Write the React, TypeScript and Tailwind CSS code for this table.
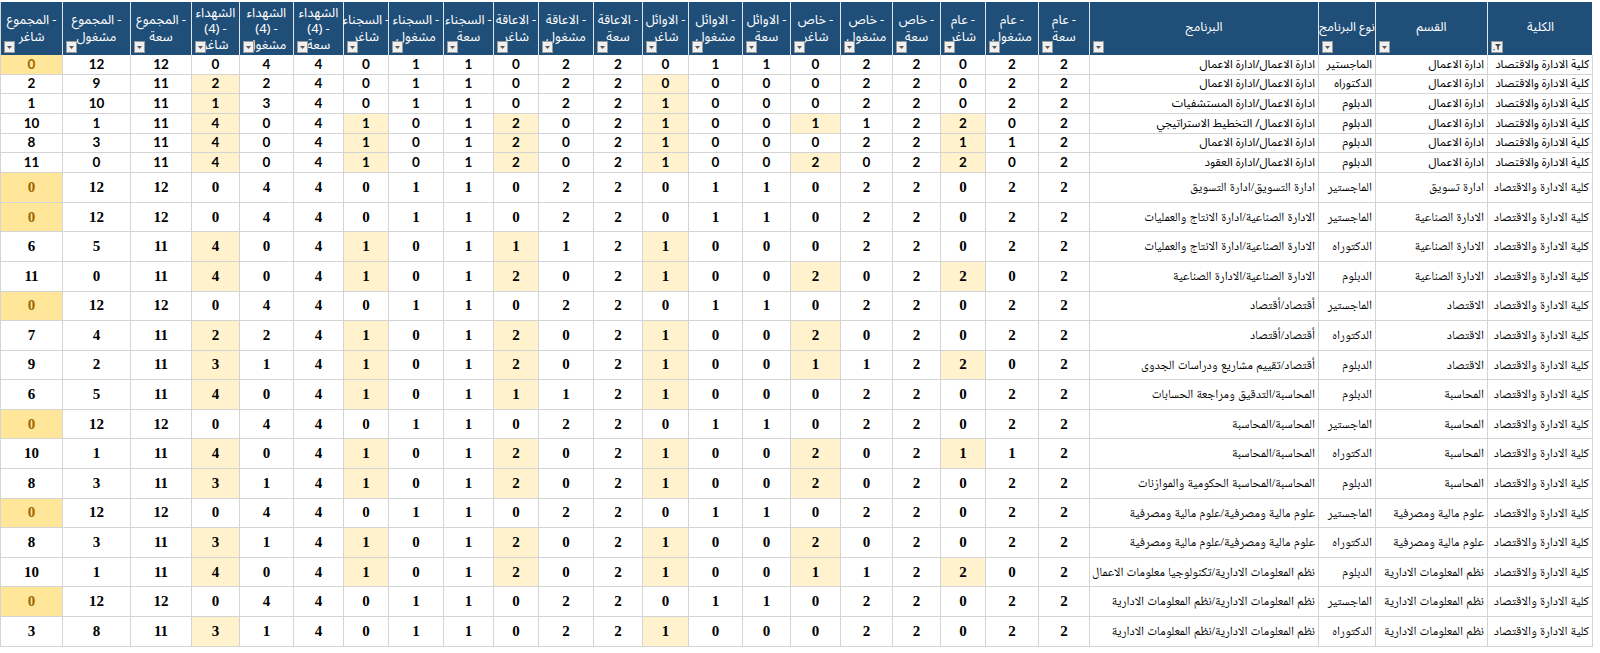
import React from "react"

// أعمدة الجدول بالترتيب المرئي من اليسار إلى اليمين
const GRID =
  "grid grid-cols-[62px_68px_61px_48px_54px_50px_45px_55px_50px_45px_55px_49px_46px_54px_48px_50px_52px_48px_45px_53px_51px_229px_57px_112px_105px]"

const groups = ["المجموع", "الشهداء", "السجناء", "الاعاقة", "الاوائل", "خاص", "عام"]
const subs = ["شاغر", "مشغول", "سعة"]

type Row = {
  college: string
  dept: string
  type: string
  program: string
  n: number[]
  extra?: number[]
}

const C = "كلية الادارة والاقتصاد"
const FULL = [0, 12, 12, 0, 4, 4, 0, 1, 1, 0, 2, 2, 0, 1, 1, 0, 2, 2, 0, 2, 2]

const rows: Row[] = [
  { college: C, dept: "ادارة الاعمال", type: "الماجستير", program: "ادارة  الاعمال/ادارة الاعمال", n: FULL },
  { college: C, dept: "ادارة الاعمال", type: "الدكتوراه", program: "ادارة  الاعمال/ادارة الاعمال", n: [2, 9, 11, 2, 2, 4, 0, 1, 1, 0, 2, 2, 0, 0, 0, 0, 2, 2, 0, 2, 2], extra: [12] },
  { college: C, dept: "ادارة الاعمال", type: "الدبلوم", program: "ادارة  الاعمال/ادارة المستشفيات", n: [1, 10, 11, 1, 3, 4, 0, 1, 1, 0, 2, 2, 1, 0, 0, 0, 2, 2, 0, 2, 2] },
  { college: C, dept: "ادارة الاعمال", type: "الدبلوم", program: "ادارة الاعمال/ التخطيط الاستراتيجي", n: [10, 1, 11, 4, 0, 4, 1, 0, 1, 2, 0, 2, 1, 0, 0, 1, 1, 2, 2, 0, 2] },
  { college: C, dept: "ادارة الاعمال", type: "الدبلوم", program: "ادارة الاعمال/ادارة الاعمال", n: [8, 3, 11, 4, 0, 4, 1, 0, 1, 2, 0, 2, 1, 0, 0, 0, 2, 2, 1, 1, 2] },
  { college: C, dept: "ادارة الاعمال", type: "الدبلوم", program: "ادارة الاعمال/ادارة العقود", n: [11, 0, 11, 4, 0, 4, 1, 0, 1, 2, 0, 2, 1, 0, 0, 2, 0, 2, 2, 0, 2] },
  { college: C, dept: "ادارة تسويق", type: "الماجستير", program: "ادارة التسويق/ادارة التسويق", n: FULL },
  { college: C, dept: "الادارة الصناعية", type: "الماجستير", program: "الادارة الصناعية/ادارة الانتاج والعمليات", n: FULL },
  { college: C, dept: "الادارة الصناعية", type: "الدكتوراه", program: "الادارة الصناعية/ادارة الانتاج والعمليات", n: [6, 5, 11, 4, 0, 4, 1, 0, 1, 1, 1, 2, 1, 0, 0, 0, 2, 2, 0, 2, 2] },
  { college: C, dept: "الادارة الصناعية", type: "الدبلوم", program: "الادارة الصناعية/الادارة الصناعية", n: [11, 0, 11, 4, 0, 4, 1, 0, 1, 2, 0, 2, 1, 0, 0, 2, 0, 2, 2, 0, 2] },
  { college: C, dept: "الاقتصاد", type: "الماجستير", program: "أقتصاد/أقتصاد", n: FULL },
  { college: C, dept: "الاقتصاد", type: "الدكتوراه", program: "أقتصاد/أقتصاد", n: [7, 4, 11, 2, 2, 4, 1, 0, 1, 2, 0, 2, 1, 0, 0, 2, 0, 2, 0, 2, 2] },
  { college: C, dept: "الاقتصاد", type: "الدبلوم", program: "أقتصاد/تقييم مشاريع ودراسات الجدوى", n: [9, 2, 11, 3, 1, 4, 1, 0, 1, 2, 0, 2, 1, 0, 0, 1, 1, 2, 2, 0, 2] },
  { college: C, dept: "المحاسبة", type: "الدبلوم", program: "المحاسبة/التدقيق ومراجعة الحسابات", n: [6, 5, 11, 4, 0, 4, 1, 0, 1, 1, 1, 2, 1, 0, 0, 0, 2, 2, 0, 2, 2] },
  { college: C, dept: "المحاسبة", type: "الماجستير", program: "المحاسبة/المحاسبة", n: FULL },
  { college: C, dept: "المحاسبة", type: "الدكتوراه", program: "المحاسبة/المحاسبة", n: [10, 1, 11, 4, 0, 4, 1, 0, 1, 2, 0, 2, 1, 0, 0, 2, 0, 2, 1, 1, 2] },
  { college: C, dept: "المحاسبة", type: "الدبلوم", program: "المحاسبة/المحاسبة الحكومية والموازنات", n: [8, 3, 11, 3, 1, 4, 1, 0, 1, 2, 0, 2, 1, 0, 0, 2, 0, 2, 0, 2, 2] },
  { college: C, dept: "علوم مالية ومصرفية", type: "الماجستير", program: "علوم مالية ومصرفية/علوم مالية ومصرفية", n: FULL },
  { college: C, dept: "علوم مالية ومصرفية", type: "الدكتوراه", program: "علوم مالية ومصرفية/علوم مالية ومصرفية", n: [8, 3, 11, 3, 1, 4, 1, 0, 1, 2, 0, 2, 1, 0, 0, 2, 0, 2, 0, 2, 2] },
  { college: C, dept: "نظم المعلومات الادارية", type: "الدبلوم", program: "نظم المعلومات الادارية/تكنولوجيا معلومات الاعمال", n: [10, 1, 11, 4, 0, 4, 1, 0, 1, 2, 0, 2, 1, 0, 0, 1, 1, 2, 2, 0, 2] },
  { college: C, dept: "نظم المعلومات الادارية", type: "الماجستير", program: "نظم المعلومات الادارية/نظم المعلومات الادارية", n: FULL },
  { college: C, dept: "نظم المعلومات الادارية", type: "الدكتوراه", program: "نظم المعلومات الادارية/نظم المعلومات الادارية", n: [3, 8, 11, 3, 1, 4, 0, 1, 1, 0, 2, 2, 1, 0, 0, 0, 2, 2, 0, 2, 2] },
]

function DropBtn() {
  return (
    <div className="absolute left-[3px] bottom-[2px] w-[11px] h-[12px] bg-[#f0f0f0] border border-[#9a9a9a] flex items-center justify-center">
      <svg width="5" height="3" viewBox="0 0 5 3">
        <path d="M0 0h5L2.5 3z" fill="#555" />
      </svg>
    </div>
  )
}

function FilterBtn() {
  return (
    <div className="absolute left-[3px] bottom-[2px] w-[12px] h-[12px] bg-[#f0f0f0] border border-[#9a9a9a] flex items-center justify-center">
      <svg width="9" height="8" viewBox="0 0 9 8">
        <path d="M2 1h6L5.8 3.6V7L4.2 6.2V3.6z" fill="#444" />
        <rect x="0.5" y="6" width="1.2" height="1.2" fill="#444" />
      </svg>
    </div>
  )
}

// سطر "كلمة -" مع الشرطة على اليمين كما في الأصل
function Dashed({ word }: { word: string }) {
  return (
    <div dir="ltr" className="flex justify-center gap-[3px]">
      <span>{word}</span>
      <span>-</span>
    </div>
  )
}

function Header() {
  const cells: React.ReactNode[] = []
  groups.forEach((g) => {
    subs.forEach((s) => {
      const three = g === "الشهداء"
      cells.push(
        <div key={g + s} className="relative border-r border-[#dfe5ec] flex items-center justify-center">
          <div className={`text-center text-[13px] whitespace-nowrap ${three ? "leading-[16px]" : "leading-[17px]"}`}>
            {three ? (
              <>
                <div>الشهداء</div>
                <Dashed word="(4)" />
              </>
            ) : (
              <Dashed word={g} />
            )}
            <div>{s}</div>
          </div>
          <DropBtn />
        </div>
      )
    })
  })
  const single = ["البرنامج", "نوع البرنامج", "القسم", "الكلية"]
  single.forEach((t, i) => {
    cells.push(
      <div key={t} className={`relative flex items-center justify-center ${i < 3 ? "border-r border-[#dfe5ec]" : ""}`}>
        <span className="text-[12.5px] pb-[2px] whitespace-nowrap">{t}</span>
        {i === 3 ? <FilterBtn /> : <DropBtn />}
      </div>
    )
  })
  return (
    <div className={`${GRID} h-[53px] bg-[#1f4e78] text-white font-['Noto_Sans_Arabic','DejaVu_Sans',sans-serif]`}>
      {cells}
    </div>
  )
}

function DataRow({ r, idx }: { r: Row; idx: number }) {
  const top = idx < 6
  const h = top ? "h-[19.7px]" : "h-[29.6px]"
  const numFont = top
    ? "font-['Lato','Liberation_Sans',sans-serif] text-[13.5px]"
    : "font-['Liberation_Serif',serif] text-[15px]"
  const textFont = top
    ? "font-['Noto_Sans_Arabic','DejaVu_Sans',sans-serif] text-[11.5px]"
    : "font-['Liberation_Serif','Noto_Naskh_Arabic','DejaVu_Sans',serif] text-[12.5px]"
  return (
    <div className={`${GRID} ${h}`}>
      {r.n.map((v, i) => {
        let bg = "bg-white text-black"
        if (i === 0 && v === 0) bg = "bg-[#ffe699] text-[#9c6500]"
        else if (i > 0 && i % 3 === 0 && (v > 0 || r.extra?.includes(i))) bg = "bg-[#fff2cc] text-black"
        return (
          <div
            key={i}
            className={`${bg} ${numFont} font-bold border-r border-b border-[#d4d4d4] flex items-center justify-center leading-none`}
          >
            {v}
          </div>
        )
      })}
      {[r.program, r.type, r.dept, r.college].map((t, i) => (
        <div
          key={"t" + i}
          dir="rtl"
          className={`${textFont} bg-white text-black border-r border-b border-[#d4d4d4] flex items-center pr-[3px] whitespace-nowrap`}
        >
          {t}
        </div>
      ))}
    </div>
  )
}

export default function App() {
  return (
    <div className="w-[1600px] h-[653px] bg-white pt-[2px] overflow-hidden">
      <div className="w-[1592px] border-l border-[#d4d4d4]">
        <Header />
        {rows.map((r, i) => (
          <DataRow key={i} r={r} idx={i} />
        ))}
      </div>
    </div>
  )
}
